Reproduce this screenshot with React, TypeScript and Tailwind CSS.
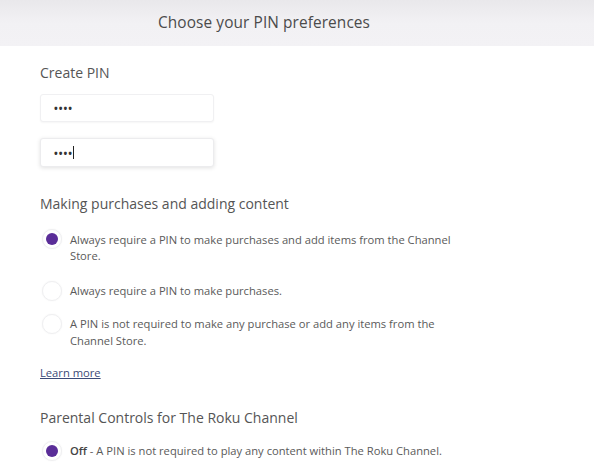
import React from "react";

function Radio({ checked }: { checked?: boolean }) {
  return (
    <div className="flex h-[20px] w-[20px] shrink-0 items-center justify-center rounded-full border border-[#efeff1] bg-white shadow-[0_0_2px_rgba(0,0,0,0.05)]">
      {checked && <div className="h-[12px] w-[12px] rounded-full bg-[#5a2d98]" />}
    </div>
  );
}

export default function App() {
  return (
    <div className="h-[472px] w-[594px] overflow-hidden bg-white text-[#4a4a4a]" style={{ fontFamily: '"Open Sans", "Liberation Sans", sans-serif' }}>
      <div className="flex h-[46px] items-center bg-gradient-to-b from-[#e9e8eb] via-[#f2f1f4] to-[#f3f2f5] pl-[158px]">
        <span className="text-[15.4px] tracking-[0.1px] text-[#4b4b4b]">Choose your PIN preferences</span>
      </div>
      <div className="pl-[40px]">
        <div className="mt-[17px] text-[14px] leading-[20px] text-[#555]">Create PIN</div>
        <div className="mt-[11px] flex h-[28px] w-[174px] items-center rounded-[3px] border border-[#f0f0f2] bg-white pl-[13px] shadow-[0_1px_2px_rgba(0,0,0,0.04)]">
          <span className="text-[10px] font-bold leading-none tracking-[1px] text-[#333]">••••</span>
        </div>
        <div className="mt-[16px] flex h-[29px] w-[174px] items-center rounded-[3px] border border-[#ececee] bg-white pl-[13px] shadow-[0_1px_4px_rgba(0,0,0,0.12)]">
          <span className="text-[10px] font-bold leading-none tracking-[1px] text-[#333]">••••</span>
          <span className="h-[13px] w-[1px] bg-[#222]" />
        </div>
        <div className="mt-[27px] text-[14px] leading-[20px] text-[#555]">Making purchases and adding content</div>
        <div className="mt-[18px] flex items-start gap-[8px]">
          <div className="mt-[-3px] ml-[2px]"><Radio checked /></div>
          <div className="w-[394px] text-[11.2px] leading-[16px] text-[#5a5a5a]">
            Always require a PIN to make purchases and add items from the Channel Store.
          </div>
        </div>
        <div className="mt-[17px] flex items-center gap-[8px]">
          <div className="ml-[2px]"><Radio /></div>
          <div className="text-[11.2px] leading-[16px] text-[#5a5a5a]">Always require a PIN to make purchases.</div>
        </div>
        <div className="mt-[14px] flex items-start gap-[8px]">
          <div className="mt-[-1px] ml-[2px]"><Radio /></div>
          <div className="w-[382px] text-[11.2px] leading-[17px] text-[#5a5a5a]">
            A PIN is not required to make any purchase or add any items from the Channel Store.
          </div>
        </div>
        <div className="mt-[16px] text-[11.2px] leading-[16px] text-[#3b4a78] underline">Learn more</div>
        <div className="mt-[27px] text-[14px] leading-[20px] text-[#555]">Parental Controls for The Roku Channel</div>
        <div className="mt-[13px] flex items-center gap-[8px]">
          <div className="ml-[2px]"><Radio checked /></div>
          <div className="text-[11.2px] leading-[16px] text-[#5a5a5a]">
            <span className="font-semibold text-[#444]">Off</span> - A PIN is not required to play any content within The Roku Channel.
          </div>
        </div>
      </div>
    </div>
  );
}
